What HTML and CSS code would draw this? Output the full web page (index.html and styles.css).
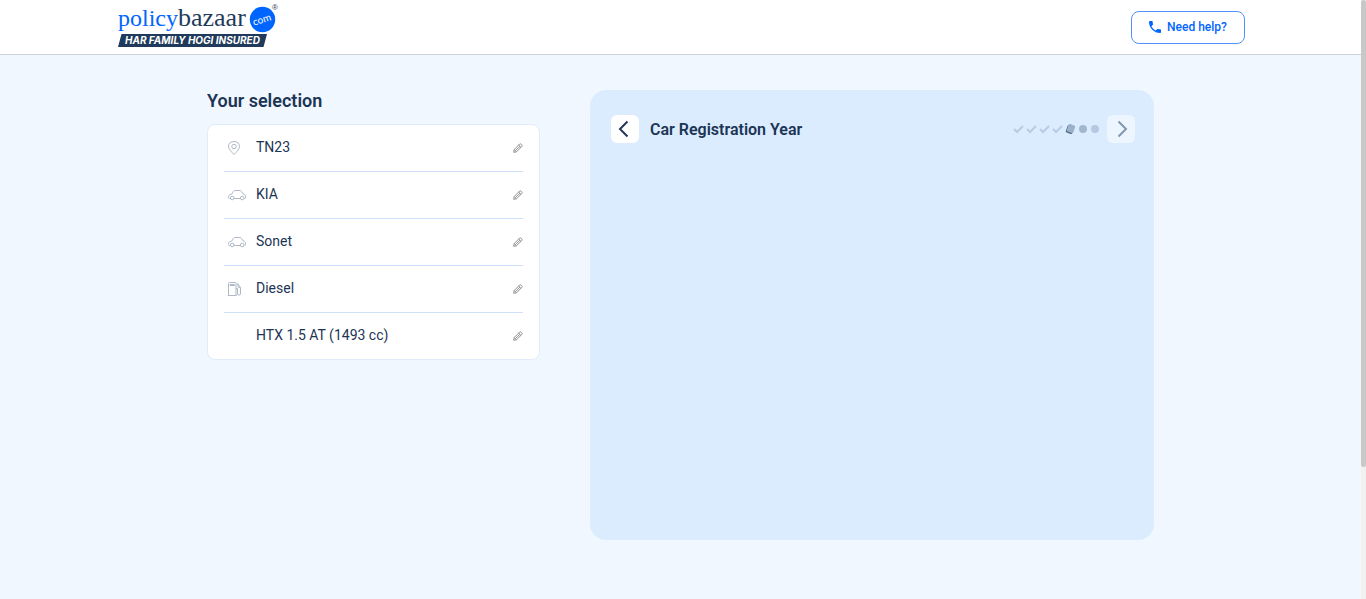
FILE: index.html
```
<!DOCTYPE html>
<html lang="en">
<head>
<meta charset="utf-8">
<meta name="viewport" content="width=device-width, initial-scale=1">
<title>Car Registration Year</title>
<link rel="stylesheet" href="styles.css">
</head>
<body>
<svg class="sprite" aria-hidden="true">
  <symbol id="car" viewBox="0 0 20 12">
    <path d="M3.200 9.500H2.500Q1.500 9.500 1.500 8.500V7.500Q1.500 6.200 2.800 5.800L4.800 5L6.500 2.300Q7 1.500 7.800 1.500H13Q13.800 1.500 14.300 2.300L16 4.800L17.500 5.300Q18.500 5.800 18.500 7.200V8.500Q18.500 9.500 17.500 9.500M7 9.500H13.500"/>
    <circle cx="5.200" cy="9" r="1.800"/><circle cx="15.200" cy="9" r="1.800"/>
  </symbol>
  <symbol id="pencil" viewBox="0 0 10 10">
    <path d="M.7 9.300L1.200 6.500L6.600 1.100Q7.300.400 8 1.100L8.900 2Q9.600 2.700 8.900 3.400L3.500 8.800ZM5.600 2L8 4.400M1.200 6.500L3.500 8.800M2.300 7.700L7 3.200"/>
  </symbol>
</svg>
<header class="topbar">
  <div class="topbar-inner">
    <a class="logo" href="#" aria-label="policybazaar.com">
      <svg width="162" height="48" viewBox="0 0 162 48">
        <text class="word word-policy" x="0" y="23">policy</text>
        <text class="word word-bazaar" x="60" y="23">bazaar</text>
        <circle cx="144.500" cy="16.500" r="12.700" fill="#0065ff"/>
        <text class="dotcom" x="144" y="20" text-anchor="middle" transform="rotate(-18 144 17)">com</text>
        <text class="reg" x="154" y="7">®</text>
        <path d="M3.500 31H149L145.500 44H0Z" fill="#1f3a5a"/>
        <text class="tagline" x="7" y="41">HAR FAMILY HOGI INSURED</text>
      </svg>
    </a>
    <button class="help" type="button">
      <svg width="12" height="12" viewBox="0 0 12 12" aria-hidden="true"><path fill="#0065ff" d="M2.400 5.200C3.400 7.100 4.900 8.600 6.800 9.600L8.300 8.100C8.500 7.900 8.700 7.900 9 8C9.700 8.200 10.500 8.300 11.300 8.300C11.700 8.300 12 8.600 12 9V11.300C12 11.700 11.700 12 11.300 12C5.100 12 0 6.900 0 .7C0 .3.300 0 .7 0H3C3.400 0 3.700.3 3.700.7C3.700 1.500 3.800 2.300 4 3C4.100 3.300 4 3.500 3.900 3.700Z"/></svg>
      <span>Need help?</span>
    </button>
  </div>
</header>
<main class="page">
  <section class="selection">
    <h1 class="selection-title">Your selection</h1>
    <ul class="list">
      <li class="item">
        <span class="item-icon"><svg class="line-icon" width="14" height="16" viewBox="0 0 14 16" aria-hidden="true"><path d="M7 14.500C5 12.300 1.500 9.500 1.500 6.400C1.500 3.400 3.800 1.500 7 1.500S12.500 3.400 12.500 6.400C12.500 9.500 9 12.300 7 14.500Z"/><circle cx="7" cy="6.500" r="2.200"/></svg></span>
        <span class="item-name">TN23</span>
        <button class="edit" type="button" aria-label="Edit registration city"><svg width="10" height="10"><use href="#pencil"/></svg></button>
      </li>
      <li class="item">
        <span class="item-icon"><svg class="line-icon" width="20" height="12" aria-hidden="true"><use href="#car"/></svg></span>
        <span class="item-name">KIA</span>
        <button class="edit" type="button" aria-label="Edit brand"><svg width="10" height="10"><use href="#pencil"/></svg></button>
      </li>
      <li class="item">
        <span class="item-icon"><svg class="line-icon" width="20" height="12" aria-hidden="true"><use href="#car"/></svg></span>
        <span class="item-name">Sonet</span>
        <button class="edit" type="button" aria-label="Edit model"><svg width="10" height="10"><use href="#pencil"/></svg></button>
      </li>
      <li class="item">
        <span class="item-icon"><svg class="line-icon" width="15" height="16" viewBox="0 0 15 16" aria-hidden="true"><path d="M1.500 14.500V2.500Q1.500 1.500 2.500 1.500H8Q9 1.500 9 2.500V14.500M.8 14.500H9.700M3 3.500H7.500V4.500H3ZM9 7.500H10.500V13Q10.500 14 11.800 14Q13.500 14 13.500 13V6.500L11 3L9.800 2.500M11 3V6L13.500 7"/></svg></span>
        <span class="item-name">Diesel</span>
        <button class="edit" type="button" aria-label="Edit fuel type"><svg width="10" height="10"><use href="#pencil"/></svg></button>
      </li>
      <li class="item">
        <span class="item-icon"></span>
        <span class="item-name">HTX 1.5 AT (1493 cc)</span>
        <button class="edit" type="button" aria-label="Edit variant"><svg width="10" height="10"><use href="#pencil"/></svg></button>
      </li>
    </ul>
  </section>
  <section class="panel">
    <div class="panel-head">
      <button class="nav" type="button" aria-label="Back"><svg width="28" height="28" viewBox="0 0 28 28"><path d="M16.500 6.500L9 14L16.500 21.500"/></svg></button>
      <h2 class="panel-title">Car Registration Year</h2>
      <svg class="steps" width="88" height="12" viewBox="0 0 88 12" aria-hidden="true">
        <g class="tick"><path d="M2 6L5 9L11 3"/><path d="M15 6L18 9L24 3"/><path d="M28 6L31 9L37 3"/><path d="M41 6L44 9L50 3"/></g>
        <rect x="54.500" y="2.500" width="7" height="8" rx="1.500" transform="rotate(20 58 6.500)" fill="#526a85"/>
        <rect x="55.500" y="1.500" width="7" height="8" rx="1.500" transform="rotate(20 59 5.500)" fill="#9bb0ca"/>
        <circle cx="71" cy="6" r="4" fill="#a3b6d0"/>
        <circle cx="83" cy="6" r="4" fill="#b5c8e0"/>
      </svg>
      <button class="nav nav-next" type="button" aria-label="Next"><svg width="28" height="28" viewBox="0 0 28 28"><path d="M11.500 6.500L19 14L11.500 21.500"/></svg></button>
    </div>
  </section>
</main>
<div class="scrollbar" aria-hidden="true"><div class="scrollbar-thumb"></div></div>
</body>
</html>
```
FILE: styles.css
```
* { box-sizing: border-box; }
body {
  margin: 0;
  padding-right: 5px;
  background: #f0f7ff;
  color: #253858;
  font-family: Roboto, "Liberation Sans", sans-serif;
}
button { font: inherit; border: 0; padding: 0; background: none; cursor: pointer; }
svg { display: block; }
.sprite { display: none; }

.topbar { background: #fff; border-bottom: 1px solid #cbd2de; margin-right: -5px; padding-right: 3px; }
.topbar-inner {
  display: flex;
  align-items: center;
  justify-content: space-between;
  max-width: 1127px;
  height: 54px;
  margin: 0 auto;
}
.word-policy { font: 24px "Liberation Serif", serif; fill: #0065ff; }
.word-bazaar { font: 26px "Liberation Serif", serif; fill: #1f3a5a; }
.dotcom { font: 10px Lato, sans-serif; fill: #fff; }
.reg { font: 8px "Liberation Sans", sans-serif; fill: #1f3a5a; }
.tagline { font: italic 700 10px Inter, sans-serif; fill: #fff; }
.help {
  display: flex;
  align-items: center;
  justify-content: center;
  gap: 6px;
  width: 114px;
  height: 33px;
  border: 1px solid #5292fc;
  border-radius: 8px;
  background: #fff;
  color: #0065ff;
  font-size: 12px;
  font-weight: 500;
}

.page {
  display: grid;
  grid-template-columns: 333fr 564fr;
  gap: 50px;
  max-width: 947px;
  margin: 0 auto;
  padding: 35px 0 59px;
}
.selection-title { margin: 0 0 13px; font-size: 18px; line-height: 21px; font-weight: 600; color: #1c3554; }
.list {
  margin: 0;
  padding: 0 16px;
  list-style: none;
  background: #fff;
  border: 1px solid #e1ecfb;
  border-radius: 8px;
}
.item { display: flex; align-items: center; height: 47px; border-bottom: 1px solid #cfe0fa; }
.item:last-child { border-bottom: 0; height: 46px; }
.item-icon { width: 32px; padding-left: 3px; }
.line-icon { fill: none; stroke: #b0b8c6; stroke-width: 1; }
.item-name { flex: 1; padding-bottom: 2px; font-size: 14px; line-height: 20px; font-weight: 450; color: #1c3554; }
.edit svg { fill: none; stroke: #929292; stroke-width: 1; }

.panel { min-height: 450px; padding: 25px 19px 25px 21px; border-radius: 16px; background: #dbecff; }
.panel-head { display: flex; align-items: center; }
.nav { border-radius: 6px; background: #fff; }
.nav svg { fill: none; stroke: #253858; stroke-width: 2; }
.nav-next { background: #edf6ff; }
.nav-next svg { stroke: #8096b3; }
.panel-title { flex: 1; margin: 0 0 0 11px; font-size: 16px; font-weight: 600; color: #1c3554; }
.steps { margin-right: 7px; }
.tick { fill: none; stroke: #b9cbe3; stroke-width: 2; }

.scrollbar { position: fixed; top: 0; right: 0; bottom: 0; width: 5px; background: #f1f1f1; }
.scrollbar-thumb { height: 78%; border-radius: 4px; background: #c8c8c8; }
```
